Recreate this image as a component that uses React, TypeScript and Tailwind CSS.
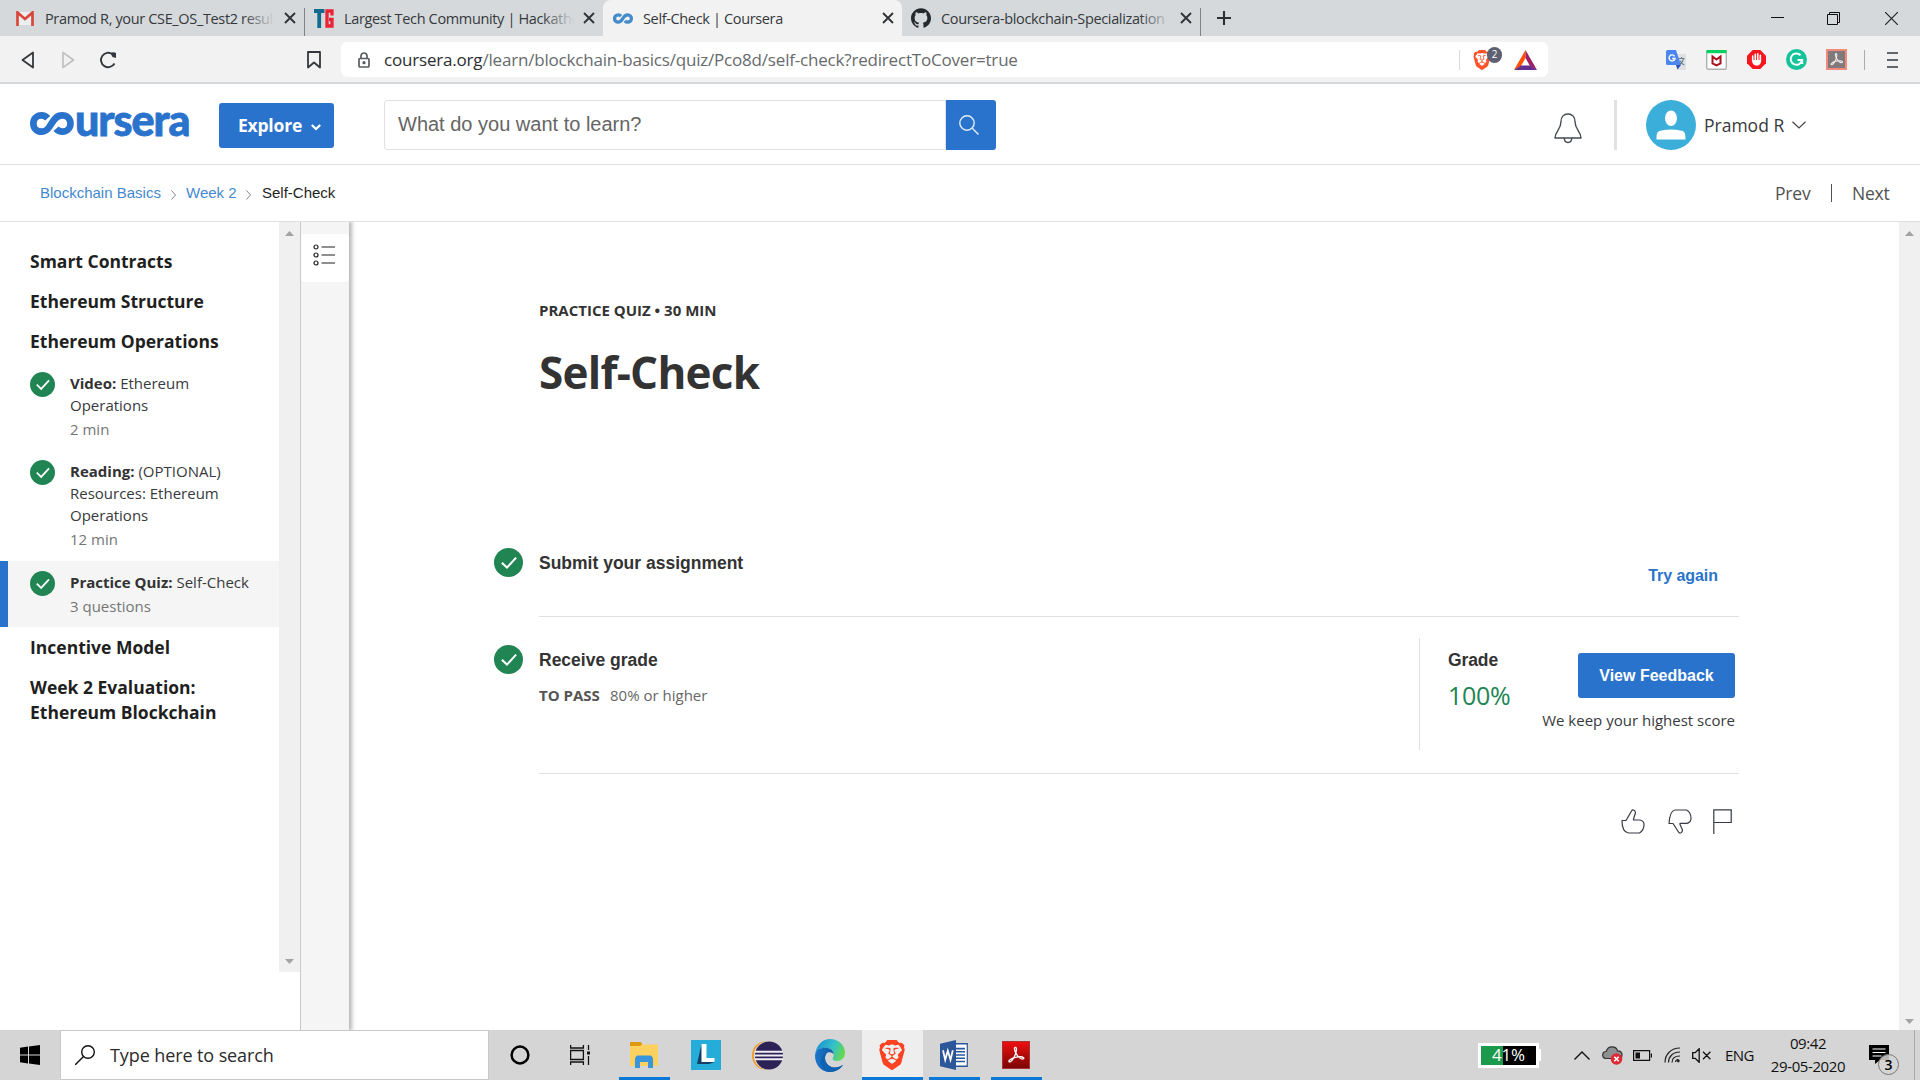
import React from "react";
import { SiGithub, SiBrave } from "react-icons/si";

const SEGOE = "font-['Open_Sans','Noto_Sans',sans-serif]";
const ARIAL = "font-['Liberation_Sans',Arial,sans-serif]";

function CloseX() {
  return (
    <svg className="h-3 w-3 shrink-0" viewBox="0 0 12 12" fill="none" stroke="#303438" strokeWidth="1.9">
      <path d="M1 1l10 10M11 1L1 11" />
    </svg>
  );
}

function CoMark({ className, color, width }: { className: string; color: string; width: number }) {
  return (
    <svg className={className} viewBox="0 0 46 24" fill="none" stroke={color} strokeWidth={width}>
      <path d="M18.500 6.500C16.500 4.200 14.500 3.500 12 3.500C7 3.500 3.500 7.200 3.500 12C3.500 16.800 7 20.500 12 20.500C17.500 20.500 19.500 17 22.500 12C25.500 7 28 3.500 33.500 3.500C38.800 3.500 42.300 7.200 42.300 12C42.300 16.800 38.800 20.500 34 20.500C31 20.500 29 19.500 27.200 17.500" />
    </svg>
  );
}

function Tab({ icon, title, width, iconWidth = "w-[30px]", fade = true }: { icon: React.ReactNode; title: string; width: string; iconWidth?: string; fade?: boolean }) {
  return (
    <div className={`flex h-9 items-center ${width}`}>
      <span className={`flex shrink-0 items-center ${iconWidth}`}>{icon}</span>
      <span className="relative mt-px h-6 w-[230px] shrink-0 overflow-hidden whitespace-nowrap text-[14.500px] leading-6 tracking-[-0.35px] text-[#34383b]">
        {title}
        {fade && <span className="absolute inset-y-0 right-0 w-8 bg-gradient-to-r from-transparent to-[#d5d9dc]" />}
      </span>
      <span className="ml-[9px] flex">
        <CloseX />
      </span>
    </div>
  );
}

function TabBar() {
  return (
    <div className="flex h-9 items-center bg-[#d5d9dc] pl-4">
      <Tab
        width="w-[288px]"
        iconWidth="w-[29px]"
        title="Pramod R, your CSE_OS_Test2 result"
        icon={
          <svg className="h-[15px] w-[18px]" viewBox="0 0 18 15">
            <path d="M1 1h16v13H1z" fill="#eceff1" />
            <path d="M1.500 15V1.500L9 8l7.500-6.500V15" fill="none" stroke="#d9473a" strokeWidth="2.700" />
          </svg>
        }
      />
      <span className="h-7 w-px self-end bg-[#7f8386]" />
      <div className="ml-[9px]">
        <Tab
          width="w-[286px]"
          title="Largest Tech Community | Hackathons"
          icon={
            <svg className="h-[19px] w-[20px]" viewBox="0 0 20 19" fill="none" strokeWidth="3.800">
              <path d="M0 2h10.500M5.200 2v17" stroke="#126b8f" />
              <path d="M18 6.500V2h-5v15h5v-6.500h-3" stroke="#ea2335" strokeWidth="3.300" />
            </svg>
          }
        />
      </div>
      <div className="ml-[3px] flex h-9 w-[299px] rounded-t-lg bg-[#f2f2f2] pl-[10px]">
        <Tab
          width="w-[289px]"
          fade={false}
          title="Self-Check | Coursera"
          icon={<CoMark className="h-[11px] w-5" color="#438bcb" width={7.5} />}
        />
      </div>
      <div className="ml-[9px]">
        <Tab width="w-[289px]" title="Coursera-blockchain-Specialization" icon={<SiGithub className="h-5 w-5 text-[#24292e]" />} />
      </div>
      <span className="h-7 w-px self-end bg-[#7f8386]" />
      <svg className="ml-[15px] h-4 w-4" viewBox="0 0 16 16" stroke="#2c3033" strokeWidth="2.100">
        <path d="M8 1v14M1 8h14" />
      </svg>
      <div className="mr-[22px] ml-auto flex items-center gap-[43px]">
        <svg className="h-[13px] w-[13px]" viewBox="0 0 13 13" stroke="#111">
          <path d="M0 5.500h13" />
        </svg>
        <svg className="mr-[2px] h-[13px] w-[13px]" viewBox="0 0 13 13" fill="none" stroke="#111" strokeWidth="1">
          <path d="M.5 2.500h10v10H.5zM2.500 2.500V.5h10v10h-2" />
        </svg>
        <svg className="h-[13px] w-[13px]" viewBox="0 0 13 13" stroke="#222" strokeWidth="1.200">
          <path d="M0 0l13 13M13 0L0 13" />
        </svg>
      </div>
    </div>
  );
}

function AcrobatGlyph({ className, color }: { className: string; color: string }) {
  return (
    <svg className={className} viewBox="0 0 20 20" fill="none" stroke={color} strokeWidth="1.200">
      <path d="M9.500 3c-1.500 0-1 3 .8 6 1.700 3 4.500 5 6.200 4.600 1.500-.5.300-2-2.500-2-3.500 0-7.500 1-9.500 2.700-1.500 1.300-1 2.300.2 1.900C7 15.400 9.700 9.800 10.300 6.300 10.600 4.300 10.300 3 9.500 3z" />
    </svg>
  );
}

function Toolbar() {
  return (
    <div className="flex h-12 items-center border-b-2 border-[#d5d9dc] bg-[#f2f2f2] pt-px pl-[21px]">
      <svg className="h-[18px] w-[14px]" viewBox="0 0 14 18" fill="none" stroke="#34383c" strokeWidth="1.800" strokeLinejoin="round">
        <path d="M12 1.500v15L1.500 9z" />
      </svg>
      <svg className="ml-[26px] h-[18px] w-[14px]" viewBox="0 0 14 18" fill="none" stroke="#bfc1c3" strokeWidth="1.700" strokeLinejoin="round">
        <path d="M2 1.500v15L12.500 9z" />
      </svg>
      <svg className="ml-[24px] h-[18px] w-[18px]" viewBox="0 0 18 18" fill="none" stroke="#34383c" strokeWidth="1.900">
        <path d="M15.500 12.500A7.200 7.200 0 1 1 13.500 3.200" />
        <path d="M11.500 2.200Q14.200.4 17 2v5l-3.500-1z" fill="#34383c" stroke="none" />
      </svg>
      <svg className="ml-[190px] h-[18px] w-[14px]" viewBox="0 0 14 18" fill="none" stroke="#34383c" strokeWidth="1.800">
        <path d="M1 1h12v15.500l-6-5-6 5z" strokeLinejoin="round" />
      </svg>
      <div className="ml-5 flex h-[35px] w-[1207px] items-center rounded-md bg-white pl-[17px]">
        <svg className="h-4 w-3" viewBox="0 0 12 16" fill="none" stroke="#5a5d60" strokeWidth="1.700">
          <rect x="1" y="6.500" width="10" height="8.500" rx="1" />
          <path d="M3 6.500V4a3 3 0 0 1 6 0v2.500" />
          <circle cx="6" cy="10.700" r=".8" fill="#5a5d60" />
        </svg>
        <span className="ml-[14px] w-[1075px] text-[17px] leading-6 tracking-[-0.19px] whitespace-nowrap text-[#676a6d]">
          <span className="text-[#2b2e31]">coursera.org</span>/learn/blockchain-basics/quiz/Pco8d/self-check?redirectToCover=true
        </span>
        <span className="h-5 w-px bg-[#d8dadd]" />
        <span className="relative ml-[12px] h-[22px] w-[20px]">
          <SiBrave className="h-[22px] w-5 text-[#fb542b]" />
          <span className="absolute -top-[2px] left-[15px] flex h-4 w-[15px] items-center justify-center rounded-full bg-[#5d6070] text-[10px] text-white">2</span>
        </span>
        <svg className="ml-[22px] h-5 w-[23px]" viewBox="0 0 23 20">
          <path d="M11.500 0L0 20l7-4 4.500-8z" fill="#ff5000" />
          <path d="M11.500 0L23 20l-7-4-4.500-8z" fill="#9e1f63" />
          <path d="M0 20h23l-7-4.500H7z" fill="#662d91" />
        </svg>
      </div>
      <div className="mr-[22px] ml-auto flex items-center">
        <svg className="h-5 w-5" viewBox="0 0 20 20">
          <path d="M8 4h12v16h-9z" fill="#dfe1e5" />
          <path d="M0 1.500A1.500 1.500 0 0 1 1.500 0H10l5 15H1.500A1.500 1.500 0 0 1 0 13.500z" fill="#4a86ee" />
          <path d="M10 15h5l-3.500 4.500z" fill="#2a50b8" />
          <path d="M8.600 6.300A3 3 0 1 0 9 8.500H6.200" fill="none" stroke="#fff" strokeWidth="1.400" />
          <path d="M12.500 8.500h6M15.500 7v1.500M17.500 9c-.8 3-2.500 4.500-4 5.500M13.800 10.500c1 2 2.500 3.500 4.500 4.500" fill="none" stroke="#66808c" strokeWidth="1.100" />
        </svg>
        <svg className="ml-5 h-5 w-[21px]" viewBox="0 0 21 20">
          <rect x=".7" y=".7" width="19.600" height="18.600" rx="1.500" fill="#fff" stroke="#aeb0b0" strokeWidth="1.400" />
          <path d="M.5 0h20v3.200H.5z" fill="#00d15f" />
          <path d="M6.500 6.500v7l4 2 4-2v-7l-4 3z" fill="none" stroke="#a8131d" strokeWidth="2" />
        </svg>
        <svg className="ml-5 h-[19px] w-[19px]" viewBox="0 0 20 20">
          <path d="M6 0h8l6 6v8l-6 6H6l-6-6V6z" fill="#f5161e" />
          <path d="M6 6.500v5M8.700 4.500V11M11.300 4v7M14 5.500V12" stroke="#fff" strokeWidth="1.700" strokeLinecap="round" />
          <path d="M5.200 10.500h9.700c0 4-2 6-4.500 6s-5.200-2-5.200-6z" fill="#fff" />
        </svg>
        <svg className="ml-5 h-[21px] w-[21px]" viewBox="0 0 21 21">
          <circle cx="10.500" cy="10.500" r="10.500" fill="#15c39a" />
          <path d="M14.500 6.200A5.700 5.700 0 1 0 16 11h-4.500M16.200 11v4" fill="none" stroke="#fff" strokeWidth="2" />
        </svg>
        <span className="ml-[19px] flex h-[21px] w-[21px] items-center justify-center border-2 border-[#f08a7d] bg-[#827a7a]">
          <AcrobatGlyph className="h-[17px] w-[17px]" color="#eee" />
        </span>
        <span className="ml-[17px] h-5 w-px bg-[#a9abad]" />
        <svg className="ml-[22px] h-4 w-[11px]" viewBox="0 0 11 16" stroke="#34383c" strokeWidth="1.700">
          <path d="M0 1h11M0 8h11M0 15h11" />
        </svg>
      </div>
    </div>
  );
}

function CourseraHeader() {
  return (
    <header className="flex h-[81px] items-center border-b border-[#e0e0e0] bg-white pt-[2px] pl-[30px]">
      <div className="-mt-[3px] flex h-[22px] w-[159px] items-center text-[#2a73cc]">
        <CoMark className="h-[23px] w-[44px] shrink-0" color="#2a73cc" width={7} />
        <span className="-mt-[8px] ml-px text-[43px] leading-[22px] font-black tracking-[-1px] [-webkit-text-stroke:0.8px_#2a73cc] font-['Lato',sans-serif]">ursera</span>
      </div>
      <button className="ml-[30px] flex h-[45px] w-[115px] items-center rounded-[3px] bg-[#2a73cc] pl-[18px] text-[17.500px] font-bold tracking-[-0.2px] text-white">
        <span className="w-[66px]">Explore</span>
        <svg className="mt-1 ml-[8px] h-[7px] w-[10px]" viewBox="0 0 10 7" fill="none" stroke="#fff" strokeWidth="2.200">
          <path d="M.8 1l4.200 4 4.200-4" />
        </svg>
      </button>
      <div className={`ml-[50px] flex h-[50px] w-[562px] items-center rounded-l-[3px] border border-[#e0e0e0] pb-[2px] pl-[13px] text-[20px] text-[#656565] ${ARIAL}`}>
        What do you want to learn?
      </div>
      <button className="flex h-[50px] w-[50px] items-center justify-center rounded-r-[3px] bg-[#2a73cc]">
        <svg className="-ml-[4px] h-5 w-5" viewBox="0 0 20 20" fill="none" stroke="#e3edf8" strokeWidth="1.400">
          <circle cx="8" cy="8" r="7.200" />
          <path d="M13.300 13.300l6.200 6.200" />
        </svg>
      </button>
      <svg className="mt-[6px] ml-[558px] h-[31px] w-[28px]" viewBox="0 0 28 31" fill="none" stroke="#444b52" strokeWidth="1.400" strokeLinejoin="round">
        <path d="M14 1c-4.500 0-7 3.200-7 7.500C7 17 1 18.500 1 25h26c0-6.500-6-8-6-16.500C21 4.200 18.500 1 14 1z" />
        <path d="M10.300 25c0 2.800 1.500 4.500 3.700 4.500s3.700-1.700 3.700-4.500" />
      </svg>
      <span className="ml-[32px] h-[50px] w-[3px] bg-[#e1e1e1]" />
      <svg className="ml-[29px] h-[50px] w-[50px]" viewBox="0 0 50 50">
        <circle cx="25" cy="25" r="25" fill="#3baeda" />
        <ellipse cx="25" cy="18.200" rx="6" ry="7.800" fill="#fff" />
        <path d="M10.500 39.500c0-7 1-8 4-8.700 7-1.700 14-1.700 21 0 3 .7 4 1.700 4 8.700z" fill="#fff" />
      </svg>
      <span className="ml-2 w-[88px] text-[17.500px] text-[#373a3c] whitespace-nowrap">Pramod R</span>
      <svg className="h-2 w-[14px]" viewBox="0 0 14 8" fill="none" stroke="#444" strokeWidth="1.200">
        <path d="M.5.8L7 7 13.500.8" />
      </svg>
    </header>
  );
}

function Crumb() {
  return (
    <svg className="mt-[3px] h-[10px] w-[5px]" viewBox="0 0 5 10" fill="none" stroke="#888" strokeWidth="1">
      <path d="M.5.5L4.500 5 .5 9.500" />
    </svg>
  );
}

function Breadcrumbs() {
  return (
    <nav className="flex h-[57px] items-center border-b border-[#e0e0e0] bg-white pl-[40px]">
      <div className={`flex items-center text-[15px] text-[#4489cf] whitespace-nowrap ${ARIAL}`}>
        <span className="w-[131px]">Blockchain Basics</span>
        <Crumb />
        <span className="ml-[10px] w-[60px]">Week 2</span>
        <Crumb />
        <span className="ml-[11px] text-[#1f1f1f]">Self-Check</span>
      </div>
      <div className="ml-auto flex w-[145px] items-center text-[17.500px] tracking-[-0.2px] text-[#525252]">
        <span className="w-[56px]">Prev</span>
        <span className="h-[18px] w-px bg-[#525252]" />
        <span className="ml-[20px]">Next</span>
      </div>
    </nav>
  );
}

function Check({ className }: { className: string }) {
  return (
    <svg className={className} viewBox="0 0 24 24">
      <circle cx="12" cy="12" r="12" fill="#208552" />
      <path d="M6.500 12.200l4.200 4 7.600-8.200" fill="none" stroke="#fff" strokeWidth="1.700" />
    </svg>
  );
}

function Item({ kind, name, meta, active, className }: { kind: string; name: string; meta: string; active?: boolean; className: string }) {
  return (
    <div className={`flex pr-3 ${active ? "border-l-8 border-[#2a73cc] bg-[#f5f5f5] pl-[22px]" : "pl-[30px]"} ${className}`}>
      <Check className="h-[25px] w-[25px] shrink-0" />
      <div className="ml-[15px] text-[15px] leading-[22px] text-[#373a3c]">
        <div>
          <b className="font-bold text-[#333]">{kind}:</b> {name}
        </div>
        <div className="mt-[2px] text-[#757575]">{meta}</div>
      </div>
    </div>
  );
}

function ScrollArrow({ down }: { down?: boolean }) {
  return (
    <svg className="h-[5px] w-[9px]" viewBox="0 0 9 5" fill="#a3a3a3">
      <path d={down ? "M0 0h9L4.500 5z" : "M0 5h9L4.500 0z"} />
    </svg>
  );
}

function Sidebar() {
  return (
    <aside className="flex h-full w-[349px] shrink-0 shadow-[2px_0_4px_1px_rgba(0,0,0,0.28)]">
      <div className="w-[279px] bg-white pt-[27px]">
        <div className="pl-[30px] text-[17.500px] leading-[25px] font-bold text-[#1f1f1f]">
          <h3>Smart Contracts</h3>
          <h3 className="mt-[15px]">Ethereum Structure</h3>
          <h3 className="mt-[15px]">Ethereum Operations</h3>
        </div>
        <Item kind="Video" name="Ethereum Operations" meta="2 min" className="mt-[18px] h-[88px]" />
        <Item kind="Reading" name="(OPTIONAL) Resources: Ethereum Operations" meta="12 min" className="h-[101px]" />
        <Item kind="Practice Quiz" name="Self-Check" meta="3 questions" active className="h-[66px] pt-[10px]" />
        <div className="pt-[8px] pl-[30px] text-[17.500px] leading-[25px] font-bold text-[#1f1f1f]">
          <h3>Incentive Model</h3>
          <h3 className="mt-[15px] w-[220px]">Week 2 Evaluation: Ethereum Blockchain</h3>
        </div>
      </div>
      <div className="flex w-[21px] shrink-0 flex-col bg-white">
        <div className="flex h-[750px] flex-col items-center justify-between bg-[#f0f0f0] pt-[9px] pb-[8px]">
          <ScrollArrow />
          <ScrollArrow down />
        </div>
      </div>
      <div className="w-[49px] border-l border-[#c9c9c9] bg-[#f5f5f5] pt-3">
        <div className="flex h-12 items-start justify-center rounded-sm bg-white pt-[10px]">
          <svg className="-ml-[3px] h-[22px] w-[22px]" viewBox="0 0 22 22" fill="none" stroke="#222" strokeWidth="1.200">
            <circle cx="3" cy="3" r="2" />
            <circle cx="3" cy="11" r="2" />
            <circle cx="3" cy="19" r="2" />
            <path d="M8.500 3H22M8.500 11H22M8.500 19H22" />
          </svg>
        </div>
      </div>
    </aside>
  );
}

function Main() {
  return (
    <main className="flex-1 pt-[75px] pl-[145px]">
      <div className="pl-[45px]">
        <p className="text-[15px] leading-[26px] font-bold text-[#333]">PRACTICE QUIZ • 30 MIN</p>
        <h1 className="mt-[19px] text-[44px] leading-[60px] font-bold tracking-[-0.75px] text-[#333]">Self-Check</h1>
      </div>
      <div className="mt-[146px] flex h-[69px] w-[1245px]">
        <Check className="h-[29px] w-[29px] shrink-0" />
        <div className={`ml-[16px] flex flex-1 justify-between border-b border-[#e0e0e0] pt-[3px] font-bold ${ARIAL}`}>
          <h2 className="text-[17.500px] leading-6 text-[#333]">Submit your assignment</h2>
          <a className="mt-[13px] mr-[21px] text-[16px] leading-6 tracking-[-0.05px] text-[#2a73cc]">Try again</a>
        </div>
      </div>
      <div className="flex h-[157px] w-[1245px]">
        <Check className="mt-[28px] h-[29px] w-[29px] shrink-0" />
        <div className="ml-[16px] flex flex-1 border-b border-[#e0e0e0]">
          <div className="w-[880px] pt-[31px]">
            <h2 className={`text-[17.500px] leading-6 font-bold text-[#333] ${ARIAL}`}>Receive grade</h2>
            <p className="mt-[11px] flex text-[15px] leading-6 text-[#666]">
              <b className="w-[71px] font-bold text-[#555]">TO PASS</b>80% or higher
            </p>
          </div>
          <div className="mt-[21px] flex h-[112px] flex-1 border-l border-[#e0e0e0] pl-[28px]">
            <div className="w-[90px] pt-[10px]">
              <h2 className={`text-[17.500px] leading-6 font-bold tracking-[-0.1px] text-[#333] ${ARIAL}`}>Grade</h2>
              <p className="mt-[7px] text-[25px] leading-[32px] tracking-[-0.3px] text-[#208552]">100%</p>
            </div>
            <div className="mr-1 ml-auto flex flex-col items-end pt-[15px]">
              <button className={`h-[45px] w-[157px] rounded-[3px] bg-[#2a73cc] text-[16px] font-bold text-white ${ARIAL}`}>View Feedback</button>
              <p className="mt-[10px] text-[15px] leading-6 whitespace-nowrap text-[#373a3c]">We keep your highest score</p>
            </div>
          </div>
        </div>
      </div>
      <div className="mt-[35px] flex w-[1238px] justify-end text-[#373a44]">
        <svg className="h-[25px] w-[24px]" viewBox="0 0 24 25" fill="none" stroke="currentColor" strokeWidth="1.200" strokeLinejoin="round">
          <path d="M1 11.500h4L10.500 2c.6-1.200 1.500-1.300 2.500-.8 1.300.7 1.700 2 1.200 3.500L12.500 10v1H19c2.500.5 4 2.200 4 4.500 0 4.500-2 7-4.500 8.500H7.500C3.500 23.500 1 19 1 11.500z" />
        </svg>
        <svg className="ml-[23px] h-[25px] w-[24px] -scale-y-100" viewBox="0 0 24 25" fill="none" stroke="currentColor" strokeWidth="1.200" strokeLinejoin="round">
          <path d="M1 10.500h4L10.500 2c.6-1.200 1.500-1.300 2.500-.8 1.300.7 1.700 2 1.200 3.500L12 9.500v1.200h7c2.500.5 4 2.700 4 5 0 4.500-2 7-4.500 8.300H7C3 23.500 1.500 18 1 10.500z" />
        </svg>
        <svg className="ml-[21px] h-[25px] w-[19px]" viewBox="0 0 19 25" fill="none" stroke="currentColor" strokeWidth="1.200">
          <path d="M.8 25V.8h17.400v12.700H.8" />
        </svg>
      </div>
    </main>
  );
}

function Slot({ children, active, open, className }: { children: React.ReactNode; active?: boolean; open?: boolean; className: string }) {
  return (
    <div className={`flex h-[50px] items-center justify-center border-b-[3px] pt-[3px] ${active ? "bg-[#eeeeee]" : ""} ${open ? "border-[#0a78d6]" : "border-transparent"} ${className}`}>
      {children}
    </div>
  );
}

function Taskbar() {
  return (
    <footer className="flex h-[50px] items-center bg-[#d5d5d5]">
      <svg className="ml-5 h-5 w-5" viewBox="0 0 20 20" fill="#000">
        <path d="M0 2.800L8 1.600v8H0zM9 1.400L20 0v9.600H9zM0 10.500h8v8l-8-1.200zM9 10.500h11V20L9 18.600z" />
      </svg>
      <div className="ml-5 flex h-[50px] w-[429px] items-center border border-[#c9c9c9] bg-white pl-[14px]">
        <svg className="h-5 w-5" viewBox="0 0 20 20" fill="none" stroke="#111" strokeWidth="1.400">
          <circle cx="13" cy="7" r="6.300" />
          <path d="M8.500 11.500L0 20" />
        </svg>
        <span className="ml-[15px] text-[18px] tracking-[-0.1px] text-[#2b2b2b]">Type here to search</span>
      </div>
      <Slot className="w-[62px]">
        <svg className="h-5 w-5" viewBox="0 0 20 20" fill="none" stroke="#000" strokeWidth="2.500">
          <circle cx="10" cy="10" r="8.400" />
        </svg>
      </Slot>
      <Slot className="w-[57px]">
        <svg className="h-5 w-5" viewBox="0 0 20 20" fill="none" stroke="#111" strokeWidth="1.300">
          <path d="M.6 0v3h12.800V0M.6 5.500h12.800v9H.6zM.6 20v-3h12.800v3M18.500 0v5M18.500 11v9" />
          <path d="M17 6.500h3v3h-3z" fill="#111" stroke="none" />
        </svg>
      </Slot>
      <Slot className="ml-[11px] w-[51px] pr-[2px]" open>
        <svg className="h-[26px] w-7" viewBox="0 0 28 26">
          <path d="M0 0h11l2 4H0z" fill="#dc9a0c" />
          <path d="M0 4h10l2-1.500h16V24H0z" fill="#fdd160" />
          <path d="M5 26V16l2-2.500h14l2 2.500v10h-5v-6h-8v6z" fill="#3996dd" />
        </svg>
      </Slot>
      <Slot className="ml-[9px] w-[53px]">
        <svg className="h-[30px] w-[30px]" viewBox="0 0 30 30">
          <path d="M0 0h30v30H0z" fill="#25acd9" />
          <path d="M10.500 4L6 24h12l6-2-12-2z" fill="#123f66" />
          <path d="M10.500 4h5v14h8v4h-13z" fill="#fff" />
        </svg>
      </Slot>
      <Slot className="ml-[9px] w-[53px]">
        <svg className="h-[29px] w-[31px]" viewBox="0 0 31 29">
          <ellipse cx="13" cy="14.500" rx="13" ry="14" fill="#f59a25" />
          <circle cx="16" cy="14.500" r="14.200" fill="#dcdad8" />
          <ellipse cx="17" cy="14.500" rx="14" ry="14" fill="#2c2255" />
          <path d="M3 10.800h28M3 14.500h28M3 18.200h28" stroke="#f0eff5" strokeWidth="2" />
        </svg>
      </Slot>
      <Slot className="ml-[9px] w-[53px]">
        <svg className="h-[33px] w-[30px]" viewBox="0 0 30 30" preserveAspectRatio="none">
          <defs>
            <linearGradient id="edgeTop" x1="0" x2="1" y1=".2" y2=".5">
              <stop offset="0" stopColor="#1a8fd1" />
              <stop offset=".6" stopColor="#35c1c9" />
              <stop offset="1" stopColor="#64d94f" />
            </linearGradient>
            <linearGradient id="edgeLow" x1="0" x2="1">
              <stop offset="0" stopColor="#1b75c9" />
              <stop offset="1" stopColor="#0b4f93" />
            </linearGradient>
          </defs>
          <path d="M0 15C1 5 8 0 15 0c9 0 15 6 15 12.500 0 5-4 7.500-8 7.500-3 0-4.500-1-4.500-2 0-.7 1.200-1.500 1.200-4C18.700 11 15 8 10.500 8 5 8 1 11 0 15z" fill="url(#edgeTop)" />
          <path d="M0 15c1-5 5-7 10.500-7 4 0 8 2 8.200 6-1-1.300-2.500-2-4.200-2-3 0-4.500 2.500-4.500 5.500C10 22.500 15 26 20 26c3 0 5.500-.8 8-2.500C25.500 27.500 20.500 30 15 30 6 30 0 23.500 0 15z" fill="url(#edgeLow)" />
          <path d="M12 12.500c-4 1.500-6.500 5-6 9C6.500 25.500 10 29.500 15 30c5 0 10.500-2.500 13-6.500-2.500 1.700-5 2.500-8 2.500-5 0-10-3.500-10-8.500 0-2.200.8-4.100 2-5z" fill="#0d63b1" />
        </svg>
      </Slot>
      <Slot className="ml-[6px] w-[61px] pr-[2px]" active open>
        <SiBrave className="h-[32px] w-[30px] text-[#fb4322]" />
      </Slot>
      <Slot className="ml-[6px] w-[51px] pr-[2px]" open>
        <svg className="h-[30px] w-7" viewBox="0 0 28 28" preserveAspectRatio="none">
          <path d="M14 3.500h13.300v21H14z" fill="#fff" stroke="#2b579a" strokeWidth="1.200" />
          <path d="M16 8h9M16 11h9M16 14h9M16 17h9M16 20h9" stroke="#2b579a" strokeWidth="1.500" />
          <path d="M0 3.500L16 0v28L0 24.500z" fill="#2b579a" />
          <path d="M3 9.500l2.200 9 2.600-8.500 2.700 8.500 2.300-9" fill="none" stroke="#fff" strokeWidth="1.800" />
        </svg>
      </Slot>
      <Slot className="ml-[11px] w-[51px] pr-[2px]" open>
        <span className="flex h-[28px] w-7 items-center justify-center border border-[#a33] bg-gradient-to-b from-[#ee0f0f] to-[#7c0606]">
          <AcrobatGlyph className="h-[22px] w-[22px]" color="#fff" />
        </span>
      </Slot>
      <div className="ml-auto flex items-center text-[#111]">
        <div className="flex h-[25px] w-[61px] items-center border-[3px] border-white bg-gradient-to-r from-[#1a9a4a] from-40% to-black to-40% text-white">
          <span className="w-full text-center text-[17px] leading-5 tracking-[-0.2px]">41%</span>
        </div>
        <span className="h-3 w-[2px] bg-white" />
        <svg className="ml-[33px] h-[9px] w-4" viewBox="0 0 16 9" fill="none" stroke="#111" strokeWidth="1.400">
          <path d="M.5 8.500L8 1l7.500 7.500" />
        </svg>
        <svg className="ml-[12px] h-[19px] w-[21px]" viewBox="0 0 21 19">
          <path d="M4 12.500C1 12.500.7 10 .7 9c0-2 1.500-3.500 3.500-3.500C5 2.500 7.500.8 10 .8c3 0 5 1.700 5.500 4 3 0 4.500 1.700 4.500 4s-1 3.700-3 3.700z" fill="#8f9092" stroke="#333" strokeWidth="1.200" />
          <circle cx="14.500" cy="13" r="5.800" fill="#dc2a36" />
          <path d="M12.300 10.800l4.400 4.400M16.700 10.800l-4.400 4.400" stroke="#fff" strokeWidth="1.600" />
        </svg>
        <svg className="ml-[10px] h-[11px] w-[19px]" viewBox="0 0 19 11" fill="none" stroke="#111" strokeWidth="1.200">
          <path d="M.6.6h16v9.800H.6zM18.400 3.500v4" />
          <path d="M2.500 2.500H7v6H2.500z" fill="#111" stroke="none" />
        </svg>
        <svg className="ml-[12px] h-4 w-[17px]" viewBox="0 0 17 16" fill="none" stroke="#222" strokeWidth="1.200">
          <path d="M1 15.500C1 7.500 7 1 16 1M4.500 15.500c0-6 4.500-10.500 11.500-10.500M8 15.500C8 11.500 11 9 16 9M11.500 15c.2-1.700 1.500-2.500 3-2.500" />
          <circle cx="14.300" cy="14" r="1.400" fill="#222" stroke="none" />
        </svg>
        <svg className="ml-[11px] h-[15px] w-[19px]" viewBox="0 0 19 15" fill="none" stroke="#111" strokeWidth="1.300">
          <path d="M.7 4.700h2.500l4-4v13.600l-4-4H.7zM11 3.800l7.400 7.400M18.400 3.800L11 11.200" />
        </svg>
        <span className="ml-[14px] w-[32px] text-[15px] tracking-[-0.6px] whitespace-nowrap">ENG</span>
        <div className="ml-[6px] flex w-[90px] flex-col items-center text-[15px] leading-[23px] tracking-[-0.4px] whitespace-nowrap">
          <span>09:42</span>
          <span>29-05-2020</span>
        </div>
        <span className="relative ml-[16px] h-[20px] w-[30px]">
          <svg className="h-[19px] w-5" viewBox="0 0 20 19">
            <path d="M0 0h20v15h-9l-5 4v-4H0z" fill="#000" />
            <path d="M3.500 4h13M3.500 7.500h13M3.500 11h9" stroke="#fff" strokeWidth="1.200" />
          </svg>
          <span className="absolute top-[9px] left-[9px] flex h-[21px] w-[21px] items-center justify-center rounded-full border border-[#777] bg-[#d5d5d5]/85 text-[14px] leading-none font-semibold text-black">3</span>
        </span>
        <span className="ml-[15px] h-[50px] w-px bg-[#a8a8a8]" />
        <span className="w-[5px]" />
      </div>
    </footer>
  );
}

export default function App() {
  return (
    <div className={`flex h-[1080px] w-[1920px] flex-col overflow-hidden bg-white ${SEGOE}`}>
      <TabBar />
      <Toolbar />
      <CourseraHeader />
      <Breadcrumbs />
      <div className="flex h-[808px] overflow-hidden">
        <Sidebar />
        <Main />
        <div className="flex w-[21px] flex-col items-center justify-between bg-[#f0f0f0] pt-[9px] pb-[6px]">
          <ScrollArrow />
          <ScrollArrow down />
        </div>
      </div>
      <Taskbar />
    </div>
  );
}
